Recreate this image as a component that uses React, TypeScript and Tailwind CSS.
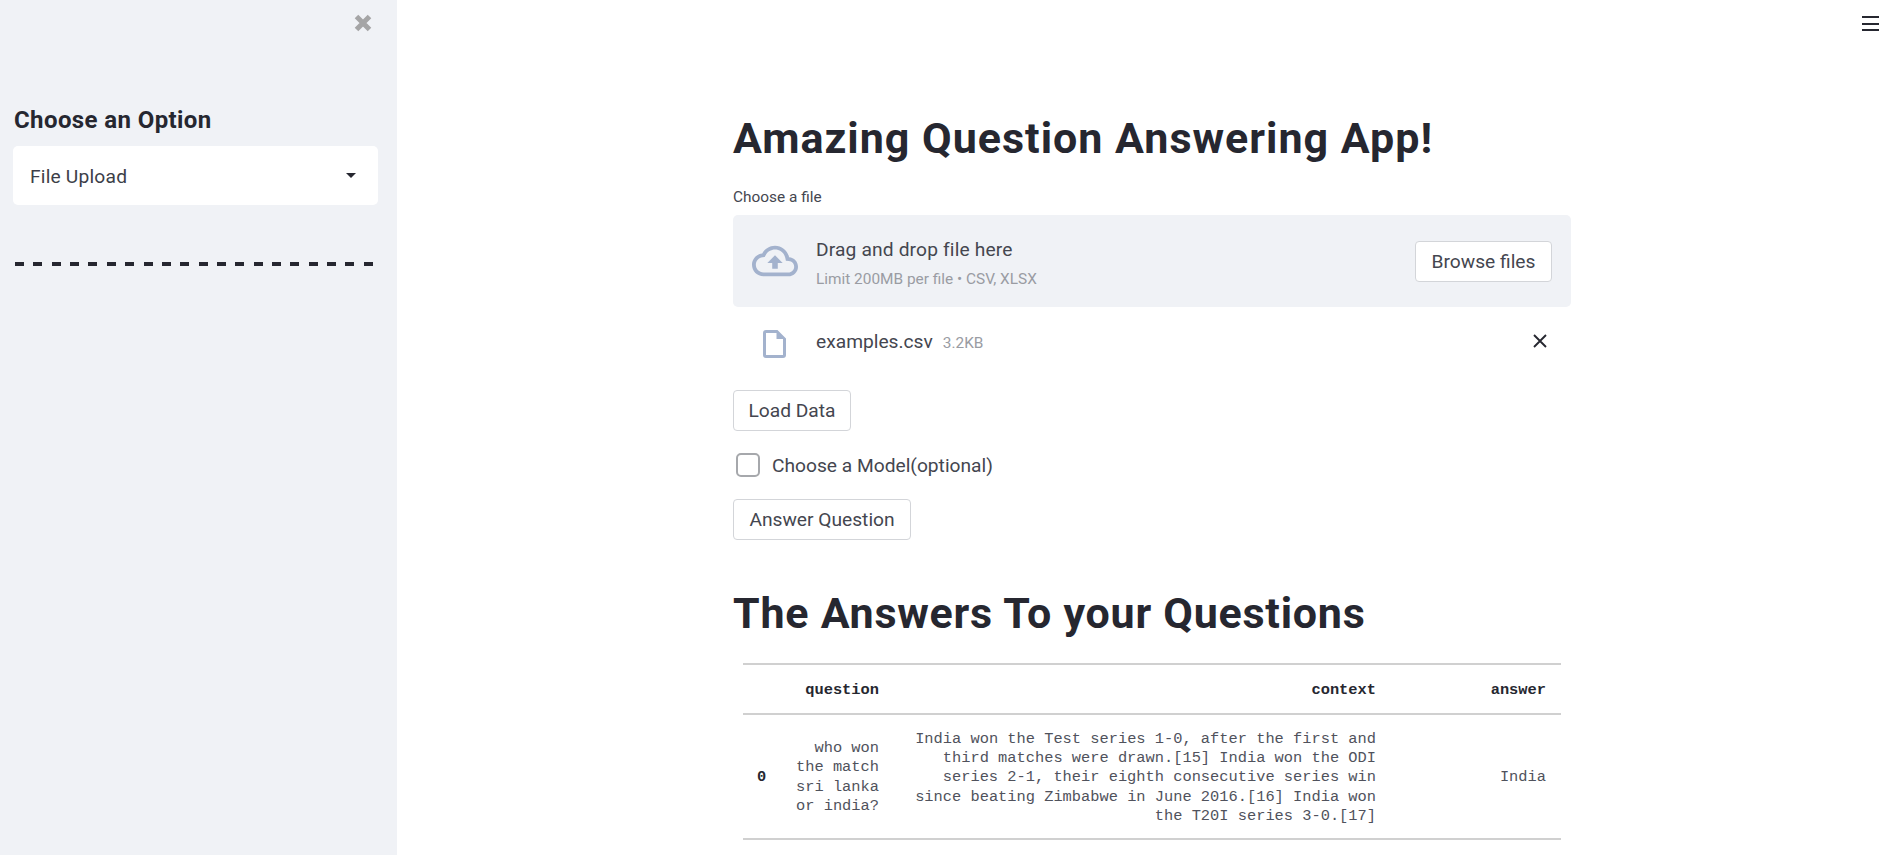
const sans = "font-['Roboto','Noto_Sans',sans-serif]";

function Btn({ label, className = "" }: { label: string; className?: string }) {
  return (
    <button className={"flex h-[41px] items-center justify-center rounded-[4px] border border-[#d3d5d9] bg-white pt-[2px] text-[19.2px] text-[#44464f] " + className}>
      {label}
    </button>
  );
}

const lines = [
  "India won the Test series 1-0, after the first and",
  "third matches were drawn.[15] India won the ODI",
  "series 2-1, their eighth consecutive series win",
  "since beating Zimbabwe in June 2016.[16] India won",
  "the T20I series 3-0.[17]",
];

export default function App() {
  return (
    <div className={"relative flex h-[855px] w-full overflow-hidden bg-white text-[#262730] " + sans}>
      <aside className="flex w-[397px] shrink-0 flex-col bg-[#f0f2f6] pl-[13px] pr-[19px]">
        <div className="flex h-[44px] items-center justify-end pr-[6px]">
          <svg width="18" height="18" viewBox="0 0 18 18" className="mt-[1px]">
            <path d="M2.5 2.5L15.5 15.5M15.5 2.5L2.5 15.5" stroke="#a5a5a6" strokeWidth="5" />
          </svg>
        </div>
        <h3 className="mt-[62px] pl-px text-[24px] leading-[28px] font-bold tracking-[0.4px] text-[#262730]">Choose an Option</h3>
        <div className="mt-[12px] flex h-[59px] items-center justify-between rounded-[5px] bg-white pl-[17px] pr-[22px] text-[19.2px] text-[#3c3e48]">
          <span className="pt-[3px] tracking-[0.2px]">File Upload</span>
          <svg width="10" height="5" viewBox="0 0 10 5"><path d="M0 0H10L5 5Z" fill="#262730" /></svg>
        </div>
        <div className="mt-[57px] flex justify-between pl-[2px] pr-[5px]">
          {Array.from({ length: 20 }).map((_, i) => (
            <span key={i} className="h-[4px] w-[9px] bg-[#262730]" />
          ))}
        </div>
      </aside>

      <main className="ml-[336px] flex w-[838px] flex-col pt-[111px]">
        <h1 className="text-[43px] leading-[54px] font-bold tracking-[1px] text-[#262730]">Amazing Question Answering App!</h1>
        <div className="mt-[22px] text-[15.4px] leading-[20px] text-[#44464f]">Choose a file</div>
        <div className="mt-[8px] flex h-[92px] items-center rounded-[5px] bg-[#f0f2f6] pl-[19px] pr-[19px]">
          <svg width="46" height="46" viewBox="0 0 24 24" fill="#a3b2cd" className="shrink-0">
            <path d="M19.35 10.04C18.67 6.59 15.64 4 12 4 9.11 4 6.6 5.64 5.35 8.04 2.34 8.36 0 10.91 0 14c0 3.31 2.69 6 6 6h13c2.76 0 5-2.24 5-5 0-2.64-2.05-4.78-4.65-4.96zM19 18H6c-2.21 0-4-1.79-4-4 0-2.05 1.53-3.76 3.56-3.97l1.07-.11.5-.95C8.08 7.14 9.94 6 12 6c2.62 0 4.88 1.86 5.39 4.43l.3 1.5 1.53.11c1.56.1 2.78 1.41 2.78 2.96 0 1.65-1.35 3-3 3zM8 13h2.55v3h2.9v-3H16l-4-4z" />
          </svg>
          <div className="ml-[18px] flex flex-1 flex-col pt-[3px]">
            <span className="text-[19.2px] leading-[26px] tracking-[0.15px] text-[#44464f]">Drag and drop file here</span>
            <span className="mt-[6px] text-[15.4px] leading-[20px] text-[#9a9ca3]">Limit 200MB per file • CSV, XLSX</span>
          </div>
          <Btn label="Browse files" className="w-[137px]" />
        </div>
        <div className="mt-[18px] flex h-[36px] items-center pl-[30px] pr-[24px]">
          <svg width="23" height="28" viewBox="0 0 23 28" fill="#a3b2cd" className="mt-[2px] shrink-0">
            <path fillRule="evenodd" d="M3 0H14.5L23 8.5V25a3 3 0 0 1-3 3H3a3 3 0 0 1-3-3V3a3 3 0 0 1 3-3ZM3 3V25H20V9H13.5V3Z" />
          </svg>
          <span className="ml-[30px] pb-[2px] text-[19.2px] text-[#44464f]">examples.csv</span>
          <span className="ml-[10px] flex-1 pt-[1px] text-[15.4px] text-[#9a9ca3]">3.2KB</span>
          <svg width="14" height="14" viewBox="0 0 14 14" className="-mt-[4px]">
            <path d="M1 1L13 13M13 1L1 13" stroke="#262730" strokeWidth="1.9" />
          </svg>
        </div>
        <Btn label="Load Data" className="mt-[29px] w-[118px]" />
        <div className="mt-[22px] flex h-[24px] items-center pl-[3px]">
          <span className="h-[24px] w-[24px] rounded-[5px] border-2 border-[#a6a8ac] bg-white" />
          <span className="ml-[12px] pt-[2px] text-[19.2px] text-[#44464f]">Choose a Model(optional)</span>
        </div>
        <Btn label="Answer Question" className="mt-[22px] w-[178px]" />
        <h2 className="mt-[46px] text-[43px] leading-[54px] font-bold tracking-[0.75px] text-[#262730]">The Answers To your Questions</h2>

        <table className="mt-[23px] ml-[10px] w-[818px] table-fixed border-collapse font-['Liberation_Mono',monospace] text-[15.36px] leading-[19.2px] text-[#50525c]">
          <colgroup>
            <col className="w-[39px]" />
            <col className="w-[112px]" />
            <col className="w-[497px]" />
            <col className="w-[170px]" />
          </colgroup>
          <thead>
            <tr className="h-[50px] border-t-2 border-b-2 border-[#d0d0d0]">
              <th />
              <th className="pr-[15px] pt-[3px] text-right font-bold text-[#262730]">question</th>
              <th className="pr-[15px] pt-[3px] text-right font-bold text-[#262730]">context</th>
              <th className="pr-[15px] pt-[3px] text-right font-bold text-[#262730]">answer</th>
            </tr>
          </thead>
          <tbody>
            <tr className="h-[125px] border-b-2 border-[#d0d0d0]">
              <td className="pl-[14px] pt-[3px] font-bold text-[#262730]">0</td>
              <td className="pr-[15px] pt-[2px] text-right">who won<br />the match<br />sri lanka<br />or india?</td>
              <td className="pr-[15px] pt-[3px] text-right">
                {lines.map((l) => (
                  <div key={l} className="whitespace-nowrap">{l}</div>
                ))}
              </td>
              <td className="pr-[15px] pt-[2px] text-right">India</td>
            </tr>
          </tbody>
        </table>
      </main>

      <div className="absolute left-[1862px] top-[16px] flex h-[15px] w-[17px] flex-col justify-between">
        <span className="h-[2px] bg-[#262730]" />
        <span className="h-[2px] bg-[#262730]" />
        <span className="h-[2px] bg-[#262730]" />
      </div>
    </div>
  );
}
